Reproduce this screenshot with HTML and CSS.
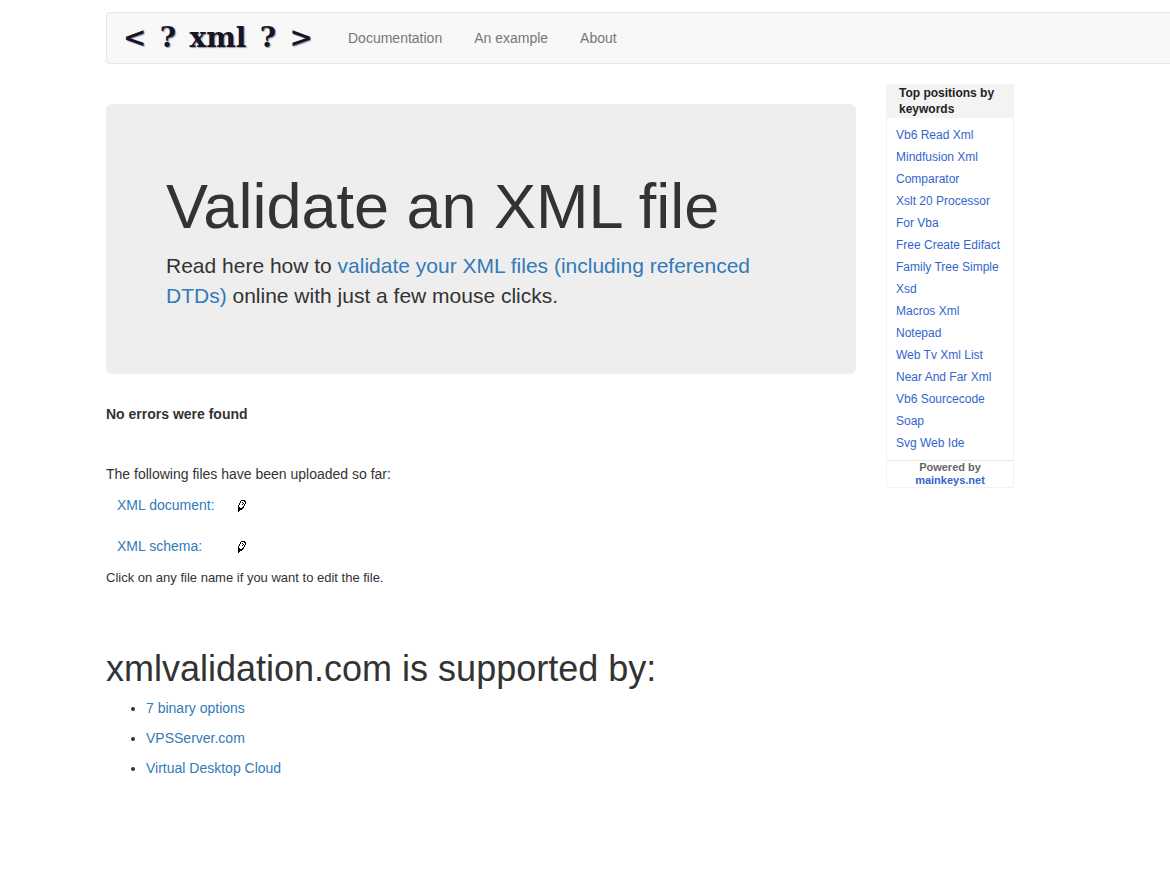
FILE: index.html
```html
<!DOCTYPE html>
<html lang="en">
<head>
<meta charset="utf-8">
<meta name="viewport" content="width=device-width, initial-scale=1">
<title>Validate an XML file</title>
<link rel="stylesheet" href="styles.css">
</head>
<body>
<svg class="sprite" aria-hidden="true">
  <symbol id="pencil" viewBox="0 0 9 12">
    <path d="M4 0h4v1h-4zM3 1h1v2h-1zM7 1h2v1h-2zM5 2h1v1h-1zM8 2h1v2h-1zM2 3h1v2h-1zM6 3h1v1h-1zM7 4h1v2h-1zM5 4h1v1h-1zM1 5h1v2h-1zM6 6h1v2h-1zM1 7h2v1h-2zM5 7h1v1h-1zM1 8h5v1h-5zM1 9h4v1h-4zM1 10h2v1h-2zM1 11h1v1h-1z"/>
  </symbol>
</svg>
<div class="page">
  <nav class="navbar">
    <a class="brand" href="#"><span>&lt;</span><span>?</span><span>xml</span><span>?</span><span>&gt;</span></a>
    <a class="nav-link" href="#">Documentation</a>
    <a class="nav-link" href="#">An example</a>
    <a class="nav-link" href="#">About</a>
  </nav>
  <div class="columns">
    <main class="main">
      <section class="hero">
        <h1>Validate an XML file</h1>
        <p>Read here how to <a href="#">validate your XML files (including referenced DTDs)</a> online with just a few mouse clicks.</p>
      </section>
      <p class="status"><strong>No errors were found</strong></p>
      <p class="intro">The following files have been uploaded so far:</p>
      <div class="files">
        <div class="file"><a class="file-name" href="#">XML document:</a><a class="edit" href="#" aria-label="Edit XML document"><svg class="pencil"><use href="#pencil"/></svg></a></div>
        <div class="file"><a class="file-name" href="#">XML schema:</a><a class="edit" href="#" aria-label="Edit XML schema"><svg class="pencil"><use href="#pencil"/></svg></a></div>
      </div>
      <p class="hint">Click on any file name if you want to edit the file.</p>
      <h2>xmlvalidation.com is supported by:</h2>
      <ul class="sponsors">
        <li><a href="#">7 binary options</a></li>
        <li><a href="#">VPSServer.com</a></li>
        <li><a href="#">Virtual Desktop Cloud</a></li>
      </ul>
    </main>
    <aside class="keywords">
      <h3>Top positions by keywords</h3>
      <ul>
        <li><a href="#">Vb6 Read Xml</a></li>
        <li><a href="#">Mindfusion Xml</a></li>
        <li><a href="#">Comparator</a></li>
        <li><a href="#">Xslt 20 Processor</a></li>
        <li><a href="#">For Vba</a></li>
        <li><a href="#">Free Create Edifact</a></li>
        <li><a href="#">Family Tree Simple</a></li>
        <li><a href="#">Xsd</a></li>
        <li><a href="#">Macros Xml</a></li>
        <li><a href="#">Notepad</a></li>
        <li><a href="#">Web Tv Xml List</a></li>
        <li><a href="#">Near And Far Xml</a></li>
        <li><a href="#">Vb6 Sourcecode</a></li>
        <li><a href="#">Soap</a></li>
        <li><a href="#">Svg Web Ide</a></li>
      </ul>
      <p class="powered">Powered by<br><a href="#">mainkeys.net</a></p>
    </aside>
  </div>
</div>
</body>
</html>
```

FILE: styles.css
```css
* { box-sizing: border-box; }

body {
  margin: 0;
  font: 14px/20px "Liberation Sans", Arial, sans-serif;
  color: #333;
  background: #fff;
}

a { color: #337ab7; text-decoration: none; }
a:hover { text-decoration: underline; }
h1, h2, h3, p, ul { margin: 0; }

.sprite { display: none; }
.page { padding: 12px 0 40px 106px; }

.navbar {
  display: flex;
  align-items: center;
  gap: 32px;
  min-height: 52px;
  padding: 0 16px;
  border: 1px solid #e7e7e7;
  border-right: 0;
  border-radius: 4px 0 0 4px;
  background: #f8f8f8;
}

.brand {
  display: flex;
  justify-content: space-between;
  width: 190px;
  margin-right: 3px;
  font: bold 28px/30px "DejaVu Serif", serif;
  color: #14142a;
  text-shadow: 1px 1px 1px #999;
}
.brand:hover { text-decoration: none; }

.nav-link { color: #777; }

.columns {
  display: flex;
  align-items: flex-start;
  gap: 30px;
  margin-top: 20px;
}

.main { flex: 0 1 750px; padding-top: 20px; }

.hero {
  padding: 68px 60px 63px;
  border-radius: 6px;
  background: #eee;
}
.hero h1 { font-size: 63px; line-height: 69px; font-weight: 400; }
.hero p { margin-top: 10px; font-size: 21px; line-height: 30px; }

.status { margin-top: 30px; }
.intro { margin-top: 40px; }

.files { display: grid; gap: 21px; margin-top: 11px; padding-left: 11px; }
.file { display: flex; align-items: center; }
.file-name { width: 120px; }
.edit { display: flex; padding-top: 2px; }
.pencil { width: 9px; height: 12px; fill: #000; shape-rendering: crispEdges; }

.hint { margin-top: 12px; font-size: 13px; }

h2 { margin-top: 61px; font-size: 36px; line-height: 40px; font-weight: 400; }

.sponsors { margin-top: 4px; padding-left: 40px; line-height: 30px; }

.keywords {
  flex: 0 0 128px;
  border: 1px solid #f3f3f3;
  font-size: 12px;
}
.keywords h3 {
  padding: 0 12px 1px;
  font-size: 12px;
  line-height: 16px;
  color: #222;
  background: #f3f3f3;
}
.keywords ul { padding: 6px 0 6px 9px; list-style: none; line-height: 22px; }
.keywords a { color: #36c; }

.powered {
  border-top: 1px solid #e5e5e5;
  font-size: 11px;
  line-height: 13px;
  font-weight: 700;
  text-align: center;
  color: #666;
}
```
